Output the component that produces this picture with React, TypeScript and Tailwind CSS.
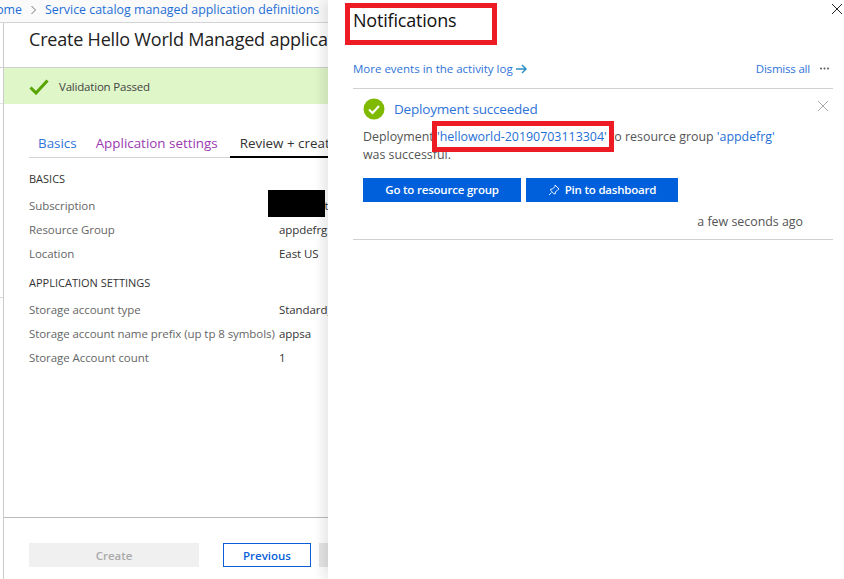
const font = { fontFamily: '"Open Sans", "Noto Sans", sans-serif' };

function Row({ label, value }: { label: string; value: string }) {
  return (
    <div className="flex h-6 items-center">
      <div className="w-[250px] shrink-0 whitespace-nowrap text-[#666] text-[11.5px] tracking-[-0.07px]">{label}</div>
      <div className="whitespace-nowrap text-[#333] text-[11.5px] tracking-[-0.07px]">{value}</div>
    </div>
  );
}

export default function App() {
  return (
    <div className="relative flex h-[579px] w-[844px] overflow-hidden bg-white" style={font}>
      {/* Left blade */}
      <div className="flex h-full w-[328px] shrink-0 flex-col overflow-hidden">
        <div className="flex h-[23px] shrink-0 items-center gap-[9px] whitespace-nowrap border-b border-[#d4d4d4] bg-[#fafafa] pb-[2px] text-[12.4px] text-[#1f6fd6]">
          <span className="-ml-[13px]">Home</span>
          <svg width="5" height="10" viewBox="0 0 5 10" fill="none" stroke="#777" strokeWidth="1" className="shrink-0"><path d="M.5 1l4 4-4 4" /></svg>
          <span>Service catalog managed application definitions</span>
        </div>
        <div className="flex min-h-0 flex-1">
          <div className="flex w-[3px] shrink-0 flex-col">
            <div className="h-[45px] border-b border-[#d0d0d0]" />
            <div className="h-[36px] border-b border-[#e2e2e2]" />
            <div className="h-[194px] border-b border-[#d8d8d8]" />
          </div>
          <div className="flex min-w-0 flex-1 flex-col border-l border-[#ccc]">
            <div className="flex h-[45px] shrink-0 items-center whitespace-nowrap border-b border-[#d0d0d0] pb-[12px] pl-[25px] text-[18px] tracking-[-0.2px] text-[#222]">
              Create Hello World Managed application
            </div>
            <div className="flex h-[36px] shrink-0 items-center gap-[10px] bg-[#dff6c8] pl-[25px] pt-[1px] text-[11.5px] tracking-[-0.2px] text-[#444]">
              <svg width="20" height="16" viewBox="0 0 20 16" fill="none" stroke="#57a300" strokeWidth="3"><path d="M1.500 8.500l5.500 5.500L18.500 1.500" /></svg>
              Validation Passed
            </div>
            <div className="mx-[25px] mt-[28px] flex h-[26px] shrink-0 gap-[19px] whitespace-nowrap border-b border-[#d4d4d4] pl-[9px] pt-[1px] text-[13.4px]">
              <span className="text-[#2f74d8]">Basics</span>
              <span className="text-[#9a3bb0]">Application settings</span>
              <span className="-ml-[7px] h-[25px] border-b-2 border-black pl-[10px] pr-[10px] text-[#333]">Review + create</span>
            </div>
            <div className="flex min-h-0 flex-1 flex-col pl-[25px]">
              <div className="mb-[7px] mt-[13px] flex h-[16px] items-center text-[11px] text-[#333]">BASICS</div>
              <Row label="Subscription" value="Subscription" />
              <Row label="Resource Group" value="appdefrg" />
              <Row label="Location" value="East US" />
              <div className="mb-[7px] mt-[9px] flex h-[16px] items-center text-[11px] text-[#333]">APPLICATION SETTINGS</div>
              <Row label="Storage account type" value="Standard_LRS" />
              <Row label="Storage account name prefix (up tp 8 symbols)" value="appsa" />
              <Row label="Storage Account count" value="1" />
            </div>
            <div className="flex h-[62px] shrink-0 gap-[24px] whitespace-nowrap border-t border-[#bbb] pl-[25px] pt-[25px] text-[11.5px]">
              <div className="flex h-6 w-[170px] shrink-0 items-center justify-center bg-[#f0f0f0] pt-[1px] font-semibold text-[#aaa]">Create</div>
              <div className="flex h-6 w-[88px] shrink-0 items-center justify-center border border-[#0a5fd8] pt-[1px] font-semibold text-[#0a5fd8]">Previous</div>
              <div className="-ml-[16px] h-6 w-[60px] shrink-0 bg-[#e6e6e6]" />
            </div>
          </div>
        </div>
      </div>

      {/* Notifications panel */}
      <div className="relative z-10 flex h-full min-w-0 flex-1 flex-col bg-white pl-[25px] pr-[11px] shadow-[-6px_0_10px_rgba(0,0,0,0.09)]">
        <div className="flex h-[41px] shrink-0 items-center text-[18px] tracking-[-0.2px] text-[#111]">Notifications</div>
        <div className="flex h-[48px] shrink-0 items-center justify-between border-b border-[#d0d0d0] pb-[6px] pt-[14px] text-[11.5px] text-[#2f74d8]">
          <span className="flex items-center gap-[3px]">
            More events in the activity log
            <svg width="11" height="10" viewBox="0 0 11 10" fill="none" stroke="#2f8fc4" strokeWidth="1.500"><path d="M0 5h10M6 1l4 4-4 4" /></svg>
          </span>
          <span className="flex items-center gap-[10px] tracking-[-0.2px]">
            Dismiss all
            <svg width="9" height="3" viewBox="0 0 9 3" fill="#555" className="mr-[4px]"><circle cx="1" cy="1.500" r="1" /><circle cx="4.500" cy="1.500" r="1" /><circle cx="8" cy="1.500" r="1" /></svg>
          </span>
        </div>
        <div className="relative flex h-[151px] shrink-0 flex-col border-b border-[#d0d0d0] px-[10px]">
          <div className="mt-[9px] flex h-[22px] items-center gap-[9px]">
            <svg width="22" height="22" viewBox="0 0 22 22"><circle cx="11" cy="11" r="10.500" fill="#7fba00" /><path d="M6 11.500l3.500 3.500L16 8" fill="none" stroke="#fff" strokeWidth="2" /></svg>
            <span className="text-[13.5px] tracking-[-0.2px] text-[#2f74d8]">Deployment succeeded</span>
          </div>
          <svg width="12" height="12" viewBox="0 0 12 12" fill="none" stroke="#aaa" strokeWidth="1" className="absolute right-[4px] top-[11px]"><path d="M1 1l10 10M11 1L1 11" /></svg>
          <div className="mt-[8px] w-[430px] text-[12.4px] leading-[18px] text-[#555]">
            Deployment <span className="text-[#1f6fd6]">'helloworld-20190703113304'</span> to resource group <span className="text-[#1f6fd6]">'appdefrg'</span> was successful.
          </div>
          <div className="mt-[14px] flex gap-[5px] text-[11.5px] font-semibold tracking-[-0.2px] text-white">
            <div className="flex h-6 w-[158px] items-center justify-center bg-[#0060dc]">Go to resource group</div>
            <div className="flex h-6 w-[152px] items-center justify-center gap-[5px] bg-[#0060dc]">
              <svg width="12" height="12" viewBox="0 0 12 12" fill="none" stroke="#fff" strokeWidth="0.900"><path d="M7 1l4 4-1 .5-2.500 2.500-.3 2-1.200-.2-3.300-3.300L2.500 5.300 4.500 5 7 2.500zM3.500 8.500L1 11" /></svg>
              Pin to dashboard
            </div>
          </div>
          <div className="mt-[11px] pr-[20px] text-right text-[12.4px] text-[#555]">a few seconds ago</div>
        </div>
        <svg width="12" height="12" viewBox="0 0 12 12" fill="none" stroke="#222" strokeWidth="1" className="absolute right-[1px] top-[3px]"><path d="M1 1l10 10M11 1L1 11" /></svg>
      </div>

      {/* Annotations drawn over the screenshot */}
      <div className="absolute left-[268px] top-[190px] h-[27px] w-[57px] bg-black" />
      <div className="absolute left-[345px] top-[3px] z-20 h-[42px] w-[152px] border-[5px] border-[#ed1c24]" />
      <div className="absolute left-[432px] top-[121px] z-20 h-[31px] w-[182px] border-[5px] border-[#ed1c24]" />
    </div>
  );
}
